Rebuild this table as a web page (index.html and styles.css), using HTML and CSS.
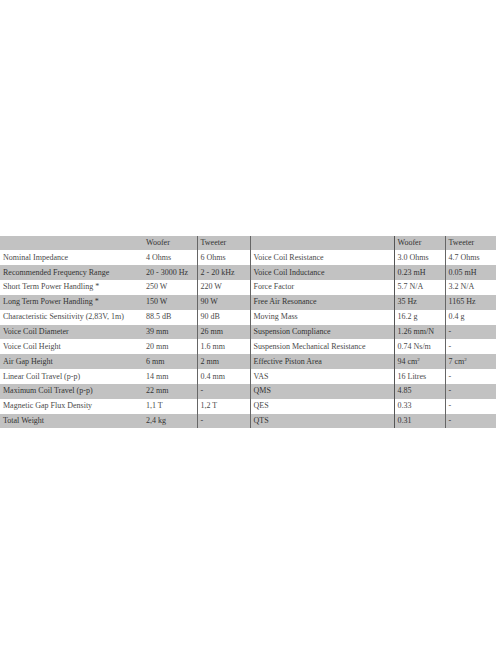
FILE: index.html
```html
<!DOCTYPE html>
<html>
<head>
<meta charset="utf-8">
<link rel="stylesheet" href="styles.css">
</head>
<body>
<table class="specs">
  <colgroup>
    <col class="c-name"><col class="c-w"><col class="c-t"><col class="c-name2"><col class="c-w2"><col class="c-t2">
  </colgroup>
  <tr class="shade"><td></td><td class="b">Woofer</td><td class="b">Tweeter</td><td class="b2"></td><td class="b">Woofer</td><td>Tweeter</td></tr>
  <tr><td>Nominal Impedance</td><td class="b">4 Ohms</td><td class="b">6 Ohms</td><td class="b2">Voice Coil Resistance</td><td class="b">3.0 Ohms</td><td>4.7 Ohms</td></tr>
  <tr class="shade"><td>Recommended Frequency Range</td><td class="b">20 - 3000 Hz</td><td class="b">2 - 20 kHz</td><td class="b2">Voice Coil Inductance</td><td class="b">0.23 mH</td><td>0.05 mH</td></tr>
  <tr><td>Short Term Power Handling *</td><td class="b">250 W</td><td class="b">220 W</td><td class="b2">Force Factor</td><td class="b">5.7 N/A</td><td>3.2 N/A</td></tr>
  <tr class="shade"><td>Long Term Power Handling *</td><td class="b">150 W</td><td class="b">90 W</td><td class="b2">Free Air Resonance</td><td class="b">35 Hz</td><td>1165 Hz</td></tr>
  <tr><td>Characteristic Sensitivity (2,83V, 1m)</td><td class="b">88.5 dB</td><td class="b">90 dB</td><td class="b2">Moving Mass</td><td class="b">16.2 g</td><td>0.4 g</td></tr>
  <tr class="shade"><td>Voice Coil Diameter</td><td class="b">39 mm</td><td class="b">26 mm</td><td class="b2">Suspension Compliance</td><td class="b">1.26 mm/N</td><td>-</td></tr>
  <tr><td>Voice Coil Height</td><td class="b">20 mm</td><td class="b">1.6 mm</td><td class="b2">Suspension Mechanical Resistance</td><td class="b">0.74 Ns/m</td><td>-</td></tr>
  <tr class="shade"><td>Air Gap Height</td><td class="b">6 mm</td><td class="b">2 mm</td><td class="b2">Effective Piston Area</td><td class="b">94 cm<sup>2</sup></td><td>7 cm<sup>2</sup></td></tr>
  <tr><td>Linear Coil Travel (p-p)</td><td class="b">14 mm</td><td class="b">0.4 mm</td><td class="b2">VAS</td><td class="b">16 Litres</td><td>-</td></tr>
  <tr class="shade"><td>Maximum Coil Travel (p-p)</td><td class="b">22 mm</td><td class="b">-</td><td class="b2">QMS</td><td class="b">4.85</td><td>-</td></tr>
  <tr><td>Magnetic Gap Flux Density</td><td class="b">1,1 T</td><td class="b">1,2 T</td><td class="b2">QES</td><td class="b">0.33</td><td>-</td></tr>
  <tr class="shade"><td>Total Weight</td><td class="b">2,4 kg</td><td class="b">-</td><td class="b2">QTS</td><td class="b">0.31</td><td>-</td></tr>
</table>
</body>
</html>
```

FILE: styles.css
```css
html, body {
  margin: 0;
  padding: 0;
  background: #ffffff;
}
body {
  min-height: 664px;
  display: flex;
  align-items: center;
}
.specs {
  width: 496px;
  table-layout: fixed;
  border-collapse: collapse;
  font-family: "Liberation Serif", "Times New Roman", serif;
  font-size: 8px;
  color: #4a4a4a;
}
.c-name { width: 143px; }
.c-w { width: 54px; }
.c-t { width: 53px; }
.c-name2 { width: 144px; }
.c-w2 { width: 51px; }
.c-t2 { width: 51px; }
.specs td {
  height: 14.85px;
  padding: 0 0 0 3px;
  line-height: 10px;
  white-space: nowrap;
  overflow: hidden;
  vertical-align: middle;
}
.specs tr.shade td {
  background: #c2c2c2;
  color: #333333;
}
.specs td.b { border-right: 1px solid #666666; }
.specs td.b2 { border-right: 1px solid #555555; }
.specs sup {
  font-size: 5px;
  line-height: 0;
  vertical-align: 3px;
}
```
